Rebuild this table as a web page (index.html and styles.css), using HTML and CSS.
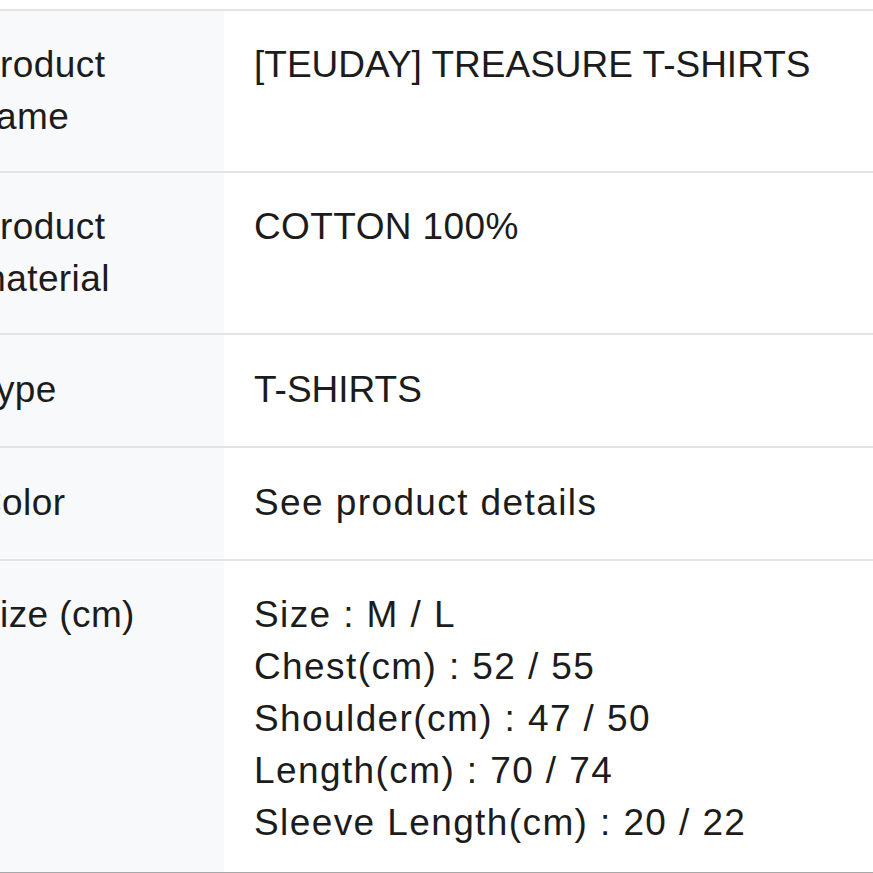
FILE: index.html
```html
<!DOCTYPE html>
<html>
<head>
<meta charset="utf-8">
<link rel="stylesheet" href="styles.css">
</head>
<body>
<div class="spec">
  <div class="row double">
    <div class="label">Product<br>name</div>
    <div class="value caps">[TEUDAY] TREASURE T-SHIRTS</div>
  </div>
  <div class="row double">
    <div class="label">Product<br>material</div>
    <div class="value mixed">COTTON 100%</div>
  </div>
  <div class="row single">
    <div class="label">Type</div>
    <div class="value caps">T-SHIRTS</div>
  </div>
  <div class="row single">
    <div class="label">Color</div>
    <div class="value">See product details</div>
  </div>
  <div class="row last">
    <div class="label">Size (cm)</div>
    <div class="value">Size : M / L<br>Chest(cm) : 52 / 55<br>Shoulder(cm) : 47 / 50<br>Length(cm) : 70 / 74<br>Sleeve Length(cm) : 20 / 22</div>
  </div>
</div>
</body>
</html>
```
FILE: styles.css
```css
html, body {
  margin: 0;
  padding: 0;
  background: #ffffff;
  overflow: hidden;
}
.spec {
  margin-top: 9px;
  margin-left: -55px;
  width: 1000px;
  border-top: 2px solid #e4e4e6;
  font-family: "Liberation Sans", Arial, sans-serif;
  font-size: 37px;
  line-height: 52px;
  color: #1c1c1c;
}
.row {
  display: grid;
  grid-template-columns: 279px 1fr;
  border-bottom: 2px solid #e4e4e6;
}
.label {
  background: #f8f9fb;
  padding: 28px 30px;
  letter-spacing: 0.4px;
}
.value {
  background: #ffffff;
  padding: 28px 30px;
  letter-spacing: 1.4px;
}
.value.caps {
  letter-spacing: 0;
}
.value.mixed {
  letter-spacing: 0.4px;
}
.row.double .label,
.row.double .value {
  padding-top: 28px;
  padding-bottom: 28px;
}
.row.single .label,
.row.single .value {
  padding-top: 29px;
  padding-bottom: 30px;
}
.row.last {
  border-bottom: 2px solid #a8a8a8;
}
.row.last .label,
.row.last .value {
  padding-top: 28px;
  padding-bottom: 23px;
}
```
